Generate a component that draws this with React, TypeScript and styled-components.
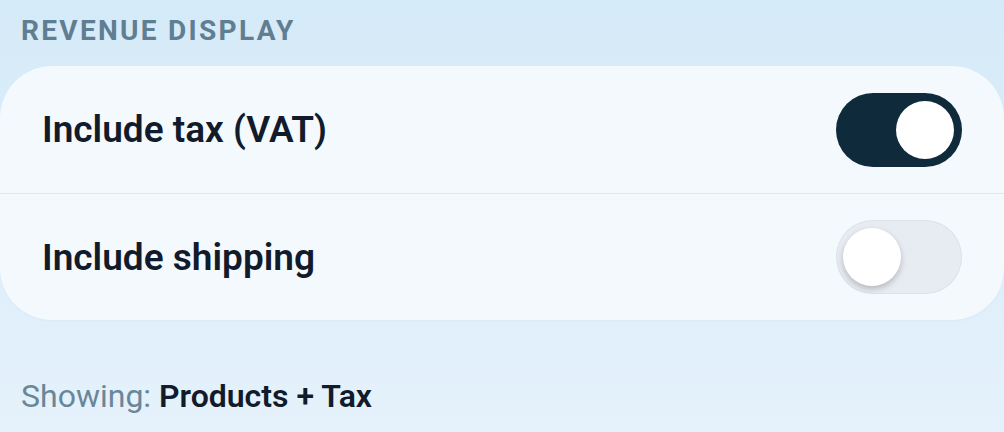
import React, { useState } from 'react'
import styled, { createGlobalStyle } from 'styled-components'

const GlobalStyle = createGlobalStyle`
  html, body {
    margin: 0;
    padding: 0;
  }
  body {
    width: 1004px;
    height: 432px;
    overflow: hidden;
    font-family: Roboto, "Liberation Sans", sans-serif;
    background: linear-gradient(180deg, #d5eaf8 0%, #dfeefa 60%, #e5f2fc 100%);
  }
`

const Screen = styled.div`
  display: flex;
  flex-direction: column;
  height: 432px;
`

const SectionTitle = styled.div`
  padding: 14px 0 0 21px;
  font-size: 28px;
  font-weight: 700;
  letter-spacing: 2.3px;
  color: #5f7e92;
  text-transform: uppercase;
`

const Card = styled.div`
  margin-top: 19px;
  background: #f4f9fd;
  border-radius: 52px;
  overflow: hidden;
  box-shadow: 0 1px 2px rgba(120, 160, 190, 0.08);
`

const Row = styled.div<{ $divider?: boolean }>`
  display: flex;
  align-items: center;
  justify-content: space-between;
  height: 127px;
  padding: 0 42px;
  box-sizing: border-box;
  border-top: ${(p) => (p.$divider ? '1px solid #dfe7ed' : 'none')};
`

const Label = styled.span`
  font-size: 37px;
  font-weight: 600;
  color: #111b2b;
`

const Track = styled.button<{ $on: boolean }>`
  position: relative;
  width: 126px;
  height: 74px;
  border: none;
  padding: 0;
  border-radius: 37px;
  cursor: pointer;
  background: ${(p) => (p.$on ? '#0f2a3b' : '#e7ecf2')};
  box-shadow: ${(p) => (p.$on ? 'none' : 'inset 0 0 0 1px rgba(200, 210, 220, 0.35)')};
`

const Knob = styled.span<{ $on: boolean }>`
  position: absolute;
  top: 8px;
  left: ${(p) => (p.$on ? '60px' : '7px')};
  width: 58px;
  height: 58px;
  border-radius: 50%;
  background: #ffffff;
  box-shadow: ${(p) => (p.$on ? 'none' : '0 3px 6px rgba(0, 0, 0, 0.22)')};
`

const Summary = styled.div`
  margin-top: 57px;
  padding-left: 21px;
  font-size: 32px;
  color: #6a8799;
`

const SummaryValue = styled.span`
  font-weight: 600;
  color: #111b2b;
`

const Toggle = ({ on, onChange }: { on: boolean; onChange: () => void }) => (
  <Track $on={on} onClick={onChange} aria-pressed={on}>
    <Knob $on={on} />
  </Track>
)

const App = () => {
  const [tax, setTax] = useState(true)
  const [shipping, setShipping] = useState(false)

  const parts = ['Products']
  if (tax) parts.push('Tax')
  if (shipping) parts.push('Shipping')

  return (
    <Screen>
      <GlobalStyle />
      <SectionTitle>Revenue Display</SectionTitle>
      <Card>
        <Row>
          <Label>Include tax (VAT)</Label>
          <Toggle on={tax} onChange={() => setTax(!tax)} />
        </Row>
        <Row $divider>
          <Label>Include shipping</Label>
          <Toggle on={shipping} onChange={() => setShipping(!shipping)} />
        </Row>
      </Card>
      <Summary>
        Showing: <SummaryValue>{parts.join(' + ')}</SummaryValue>
      </Summary>
    </Screen>
  )
}

export default App
